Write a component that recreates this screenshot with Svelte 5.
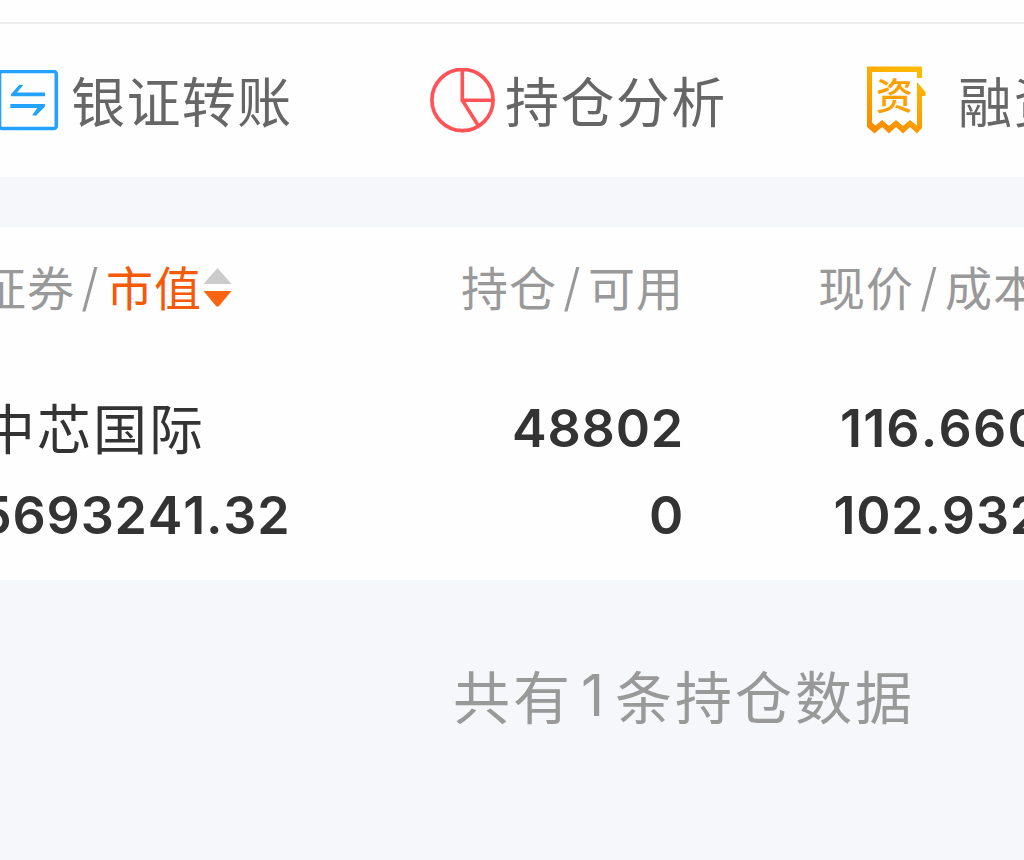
<script>
  const holding = {
    name: '中芯国际',
    value: '5693241.32',
    amount: '48802',
    available: '0',
    price: '116.660',
    cost: '102.932'
  };
</script>

<main class="page">
  <div class="top-strip"></div>
  <nav class="actions">
    <a class="action transfer">
      <svg width="60" height="62" viewBox="0 0 60 62" fill="none">
        <rect x="-0.5" y="1.5" width="56.8" height="57" rx="2.5" stroke="#24a2ff" stroke-width="3.6" />
        <path d="M19.5 14.5Q21.5 15.5 23.5 14.8L17 22.5H45V26.3H11V24.3ZM10.3 34H45V36.5L36 45.8Q34 45 32 45.5L37.3 38H10.3Z" fill="#24a2ff" />
      </svg>
      <span>银证转账</span>
    </a>
    <a class="action analysis">
      <svg width="66" height="66" viewBox="0 0 66 66" fill="none" stroke="#ff5357">
        <circle cx="32.5" cy="32" r="30.6" stroke-width="3.7" />
        <path d="M32.3 2V32.2H62M32.3 32.2L47.8 56.8" stroke-width="3.6" />
      </svg>
      <span>持仓分析</span>
    </a>
    <a class="action margin-trade">
      <span class="receipt">
        <svg width="60" height="70" viewBox="0 0 60 70" fill="none">
          <defs>
            <linearGradient id="amber" x1="50" y1="0" x2="10" y2="68" gradientUnits="userSpaceOnUse">
              <stop stop-color="#ffbd00" />
              <stop offset="1" stop-color="#f98b00" />
            </linearGradient>
          </defs>
          <path d="M1 0.5H56V12H51V6H6V56.5L9.5 59.5L16.2 54L23 60L30 54L37 60L44 54L51 59.5V16L59.5 26V30H56V62L51 67.5L44 61L37 67.5L30 61L23 67.5L16.2 61L8.5 67.5L1 61Z" fill="url(#amber)" />
        </svg>
        <b>资</b>
      </span>
      <span>融资融券</span>
    </a>
  </nav>

  <section class="holdings">
    <div class="row head">
      <div class="cell first">
        <span>证券</span><i>/</i><span class="active">市值</span>
        <svg class="sort" width="29" height="40" viewBox="0 0 29 40">
          <path d="M14.5 0L28.5 16H0.5Z" fill="#cbcbcb" />
          <path d="M0.5 23H28.5L16 38Q14.5 39.5 13 38Z" fill="#fb6410" />
        </svg>
      </div>
      <div class="cell"><span>持仓</span><i>/</i><span>可用</span></div>
      <div class="cell quote"><span>现价</span><i>/</i><span>成本</span></div>
    </div>
    <div class="row name-line">
      <div class="cell first name">{holding.name}</div>
      <div class="cell num">{holding.amount}</div>
      <div class="cell num price">{holding.price}</div>
    </div>
    <div class="row value-line">
      <div class="cell first num">{holding.value}</div>
      <div class="cell num">{holding.available}</div>
      <div class="cell num cost">{holding.cost}</div>
    </div>
  </section>

  <footer><span>共有</span><span class="count">1</span><span>条持仓数据</span></footer>
</main>

<style>
  :global(body) {
    margin: 0;
    background: #f6f7fa;
  }
  .page {
    width: 1024px;
    height: 860px;
    overflow: hidden;
    background: #f6f7fa;
    font-family: Inter, 'Noto Sans CJK SC', sans-serif;
    white-space: nowrap;
  }
  .top-strip {
    height: 22px;
    background: #fefefe;
    border-bottom: 2px solid #ededee;
  }
  .actions {
    display: flex;
    height: 153px;
    background: #fefefe;
    color: #666;
    font-size: 54px;
    letter-spacing: 1.4px;
  }
  .action {
    display: flex;
    flex: none;
    align-items: center;
    height: 153px;
  }
  .action > span:last-child {
    line-height: 153px;
    padding-top: 5px;
  }
  .action svg {
    display: block;
    flex: none;
  }
  .transfer {
    width: 430px;
    gap: 11px;
  }
  .analysis {
    width: 436px;
    gap: 9px;
  }
  .margin-trade {
    gap: 32px;
  }
  .receipt {
    position: relative;
    width: 60px;
    height: 70px;
  }
  .receipt b {
    position: absolute;
    left: 10px;
    top: 9px;
    font-size: 37px;
    line-height: 44px;
    letter-spacing: 0;
    font-weight: 500;
    color: #fca000;
  }
  .holdings {
    height: 353px;
    margin-top: 50px;
    background: #fefefe;
  }
  .row {
    display: grid;
    grid-template-columns: 340px 344px 360px;
  }
  .cell {
    display: flex;
    align-items: center;
    justify-content: flex-end;
  }
  .first {
    justify-content: flex-start;
  }
  .head {
    height: 124px;
    color: #999;
    font-size: 47px;
    letter-spacing: 1px;
  }
  .head span {
    margin-top: -7px;
  }
  .head .first {
    margin-left: -21px;
  }
  .head .sort {
    margin: -2px 0 0 1px;
  }
  .head i {
    width: 31px;
    margin-top: -3px;
    text-align: center;
    font-size: 51px;
    font-style: normal;
    font-family: Inter, sans-serif;
    font-weight: 300;
  }
  .quote {
    padding-right: 3px;
  }
  .active {
    color: #f45a09;
  }
  .name-line {
    height: 80px;
    padding-top: 37px;
  }
  .value-line {
    height: 94px;
  }
  .name {
    margin: -3px 0 0 -19px;
    color: #333;
    font-size: 54px;
    letter-spacing: 2px;
  }
  .num {
    color: #333;
    font-size: 52px;
    font-weight: 600;
    letter-spacing: 0.8px;
    font-kerning: none;
  }
  .price {
    padding-right: 1px;
    letter-spacing: 1.2px;
  }
  .cost {
    padding-right: 1px;
  }
  .value-line .first {
    margin-left: -21px;
  }
  footer {
    display: flex;
    align-items: center;
    height: 227px;
    padding-left: 453px;
    color: #999;
    font-size: 57px;
    letter-spacing: 3px;
  }
  .count {
    width: 42px;
    padding-top: 3px;
    text-align: center;
  }
</style>
